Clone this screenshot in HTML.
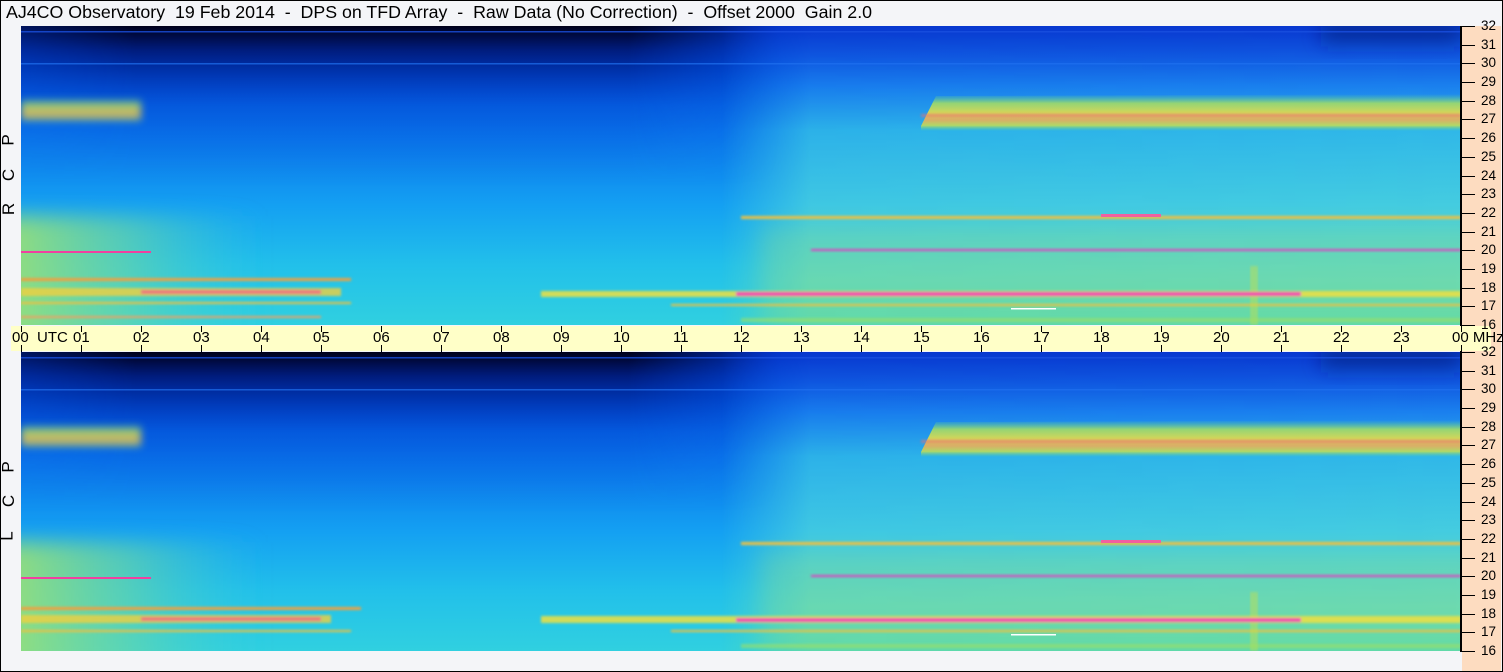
<!DOCTYPE html>
<html><head><meta charset="utf-8"><style>
body{margin:0;width:1503px;height:672px;overflow:hidden;background:#f4f5f8;font-family:"Liberation Sans","DejaVu Sans",sans-serif;position:relative}
.frame{position:absolute;left:0;top:0;width:1501px;height:670px;border:1px solid #000}
.title{position:absolute;left:6px;top:2px;font-size:17.8px;white-space:pre;color:#000}
.panel{position:absolute;left:21px;width:1440px;height:299px}
.right{position:absolute;left:1462px;top:26px;width:39px;height:645px;background:#fddcc0}
.vline{position:absolute;left:1460px;top:26px;width:2px;height:626px;background:#000}
.axis{position:absolute;left:11px;top:326px;width:1480px;height:25px;background:#ffffc8}
.tk{position:absolute;width:1px;background:#000}
.lab{position:absolute;font-size:15px;top:329px;white-space:nowrap}
.rl{position:absolute;left:1481px;font-size:13.5px}
.rt{position:absolute;left:1462px;width:13px;height:1px;background:#000}
.side{position:absolute;left:3px;font-size:17px;transform:rotate(-90deg);transform-origin:center}
</style></head><body>
<div class="frame"></div>
<div class="title">AJ4CO Observatory  19 Feb 2014  -  DPS on TFD Array  -  Raw Data (No Correction)  -  Offset 2000  Gain 2.0</div>

<svg width="0" height="0" style="position:absolute">
<defs>
<filter id="bl" x="-20%" y="-50%" width="140%" height="200%"><feGaussianBlur stdDeviation="10"/></filter>
<filter id="bm" x="-20%" y="-100%" width="140%" height="300%"><feGaussianBlur stdDeviation="4"/></filter>
<filter id="bs" x="-5%" y="-100%" width="110%" height="300%"><feGaussianBlur stdDeviation="1.2"/></filter>
<linearGradient id="base" x1="0" y1="0" x2="0" y2="1">
<stop offset="0" stop-color="#0030c0"/><stop offset="0.12" stop-color="#0048d8"/><stop offset="0.35" stop-color="#0a74ec"/><stop offset="0.6" stop-color="#14a0f2"/><stop offset="0.8" stop-color="#22c0ea"/><stop offset="1" stop-color="#30d0e0"/>
</linearGradient>
<linearGradient id="dark" x1="0" y1="0" x2="0" y2="1">
<stop offset="0" stop-color="#000018" stop-opacity="1"/><stop offset="0.15" stop-color="#001060" stop-opacity="0.75"/><stop offset="0.5" stop-color="#0030c0" stop-opacity="0.2"/><stop offset="1" stop-color="#0030c0" stop-opacity="0"/>
</linearGradient>
<linearGradient id="hfade" x1="0" y1="0" x2="1" y2="0">
<stop offset="0" stop-color="#fff" stop-opacity="0.6"/><stop offset="0.15" stop-color="#fff" stop-opacity="1"/><stop offset="0.8" stop-color="#fff" stop-opacity="1"/><stop offset="1" stop-color="#fff" stop-opacity="0"/>
</linearGradient>
<mask id="m1"><rect x="0" y="0" width="760" height="160" fill="url(#hfade)"/></mask>
<linearGradient id="rgt" x1="0" y1="0" x2="0" y2="1">
<stop offset="0" stop-color="#0838d0"/><stop offset="0.1" stop-color="#1058e0"/><stop offset="0.2" stop-color="#1a80ee"/><stop offset="0.35" stop-color="#30b8e8"/><stop offset="0.6" stop-color="#44cce0"/><stop offset="0.85" stop-color="#60d8c0"/><stop offset="1" stop-color="#58d8b0"/>
</linearGradient>
<linearGradient id="rfade" x1="0" y1="0" x2="1" y2="0">
<stop offset="0" stop-color="#fff" stop-opacity="0"/><stop offset="0.12" stop-color="#fff" stop-opacity="0.9"/><stop offset="1" stop-color="#fff" stop-opacity="1"/>
</linearGradient>
<mask id="m2"><rect x="700" y="0" width="740" height="299" fill="url(#rfade)"/></mask>
<linearGradient id="band" x1="0" y1="0" x2="0" y2="1">
<stop offset="0" stop-color="#60d890" stop-opacity="0"/><stop offset="0.25" stop-color="#a8e060"/><stop offset="0.5" stop-color="#f0e040"/><stop offset="0.7" stop-color="#f8b050"/><stop offset="0.85" stop-color="#c8e050"/><stop offset="1" stop-color="#60d890" stop-opacity="0"/>
</linearGradient>
<linearGradient id="lgreen" x1="0" y1="0" x2="1" y2="0">
<stop offset="0" stop-color="#a0e070" stop-opacity="0.95"/><stop offset="0.5" stop-color="#70d8a0" stop-opacity="0.6"/><stop offset="1" stop-color="#40d0d0" stop-opacity="0"/>
</linearGradient>
<linearGradient id="topr" x1="0" y1="0" x2="0" y2="1">
<stop offset="0" stop-color="#000820"/><stop offset="1" stop-color="#0838d0" stop-opacity="0"/>
</linearGradient>
<g id="pan">
<rect width="1440" height="299" fill="url(#base)"/>
<rect width="760" height="160" fill="url(#dark)" mask="url(#m1)"/>
<rect x="700" width="740" height="299" fill="url(#rgt)" mask="url(#m2)"/>
<rect x="1300" y="0" width="140" height="22" fill="url(#topr)" filter="url(#bl)"/>
<rect x="0" y="5" width="1440" height="1.5" fill="#1a50e0" opacity=".8"/>
<rect x="0" y="37" width="1440" height="1.5" fill="#2070f0" opacity=".7"/>
<path d="M900 100 L915 70 L1440 68 L1440 105 L900 105Z" fill="url(#band)" opacity=".85"/>
<rect x="900" y="88" width="540" height="3" fill="#f07070" opacity=".6" filter="url(#bs)"/>
<rect x="0" y="72" width="120" height="24" fill="url(#band)" opacity=".8" filter="url(#bm)"/>
<rect x="-20" y="190" width="260" height="129" fill="url(#lgreen)" filter="url(#bl)"/>
<rect x="740" y="200" width="720" height="100" fill="#a0e070" opacity=".2" filter="url(#bl)"/>
<rect x="720" y="190" width="720" height="3" fill="#f0c040" filter="url(#bs)"/>
<rect x="790" y="223" width="650" height="2" fill="#e040c0" filter="url(#bs)"/>
<rect x="1080" y="188" width="60" height="3" fill="#f060a0"/>
<rect x="650" y="278" width="790" height="2" fill="#f0c040" filter="url(#bs)"/>
<rect x="990" y="282" width="45" height="1.5" fill="#fff"/>
<rect x="1229" y="240" width="8" height="59" fill="#d0e040" opacity=".4" filter="url(#bs)"/>
<rect x="720" y="292" width="720" height="4" fill="#a0e060" opacity=".6" filter="url(#bs)"/>
<rect x="0" y="225" width="130" height="2" fill="#f040a0"/>
</g>
</defs>
</svg>

<svg class="panel" style="top:26px" viewBox="0 0 1440 299">
<use href="#pan"/>
<g filter="url(#bs)">
<rect x="0" y="252" width="330" height="3" fill="#f0a040"/>
<rect x="0" y="262" width="320" height="8" fill="#f0d040" opacity=".8"/>
<rect x="120" y="264" width="180" height="4" fill="#f07080" opacity=".9"/>
<rect x="0" y="276" width="330" height="2" fill="#f0c040"/>
<rect x="0" y="290" width="300" height="2" fill="#f0a060"/>
<rect x="520" y="265" width="920" height="6" fill="#f0e040" opacity=".85"/>
<rect x="715" y="266" width="565" height="4" fill="#f040b0"/>
</g>
</svg>

<svg class="panel" style="top:352px" viewBox="0 0 1440 299">
<use href="#pan"/>
<g filter="url(#bs)">
<rect x="0" y="255" width="340" height="3" fill="#f0a040"/>
<rect x="0" y="263" width="310" height="8" fill="#f0d040" opacity=".8"/>
<rect x="120" y="265" width="180" height="4" fill="#f07080" opacity=".9"/>
<rect x="0" y="278" width="330" height="2" fill="#f0c040"/>
<rect x="520" y="264" width="920" height="7" fill="#f0e040" opacity=".85"/>
<rect x="715" y="266" width="565" height="4" fill="#f040b0"/>
</g>
</svg>

<div class="right"></div>
<div class="vline"></div>
<div class="axis"></div>

<div id="x"></div>
<script>
var h='';
for(var i=0;i<=24;i++){var x=21+i*60;
h+='<div class="tk" style="left:'+x+'px;top:326px;height:6px"></div><div class="tk" style="left:'+x+'px;top:345px;height:7px"></div>';
var t=(i%24<10?'0':'')+(i%24);
if(i==0)h+='<div class="lab" style="left:12px">00&nbsp; UTC</div>';
else if(i==24)h+='<div class="lab" style="left:1452px">00 MHz</div>';
else h+='<div class="lab" style="left:'+(x-8)+'px">'+t+'</div>';}
for(var f=16;f<=32;f++){var y1=26+(32-f)*299/16,y2=352+(32-f)*299/16;
h+='<div class="rt" style="top:'+Math.round(y1)+'px"></div><div class="rl" style="top:'+Math.round(y1-8)+'px">'+f+'</div>';
h+='<div class="rt" style="top:'+Math.round(y2)+'px"></div><div class="rl" style="top:'+Math.round(y2-8)+'px">'+f+'</div>';}
document.getElementById('x').innerHTML=h;
</script>
<div class="side" style="top:130px">P</div>
<div class="side" style="top:165px">C</div>
<div class="side" style="top:199px">R</div>
<div class="side" style="top:457px">P</div>
<div class="side" style="top:491px">C</div>
<div class="side" style="top:526px">L</div>
</body></html>
